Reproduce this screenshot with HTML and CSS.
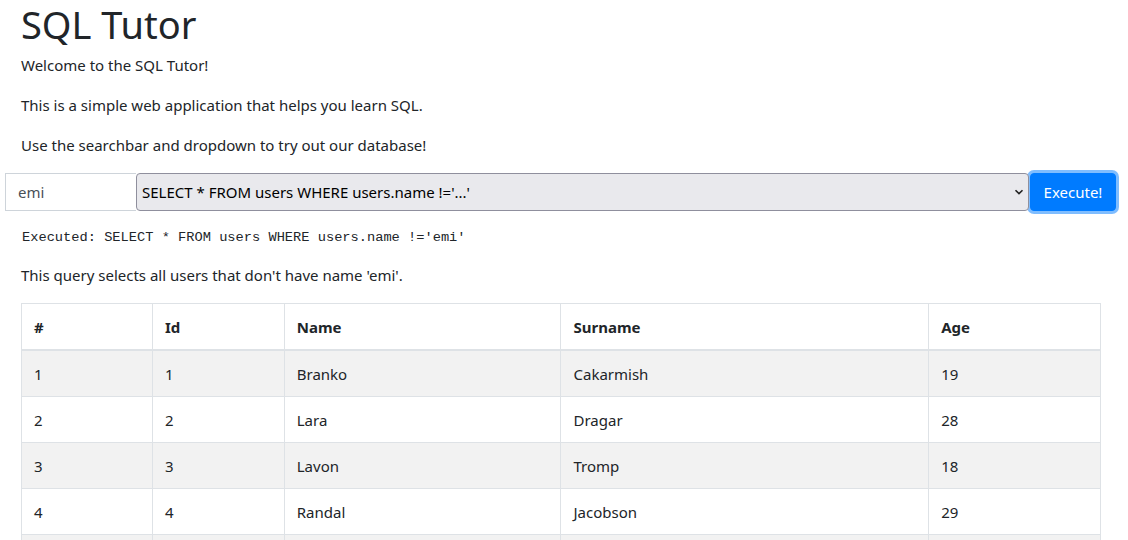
FILE: index.html
```html
<!DOCTYPE html>
<html lang="en">
<head>
<meta charset="utf-8">
<title>SQL Tutor</title>
<link rel="stylesheet" href="styles.css">
</head>
<body>
<div class="page">
  <h1 class="title">SQL Tutor</h1>
  <p>Welcome to the SQL Tutor!</p>
  <p>This is a simple web application that helps you learn SQL.</p>
  <p>Use the searchbar and dropdown to try out our database!</p>

  <form class="query-form" onsubmit="return false">
    <input class="search" type="text" value="emi">
    <div class="select-wrap">
      <select class="query-select">
        <option>SELECT * FROM users WHERE users.name !='...'</option>
      </select>
      <svg class="chevron" width="10" height="6" viewBox="0 0 10 6"><path d="M1.5 1.2 L5 4.6 L8.5 1.2" fill="none" stroke="#222" stroke-width="1.6"/></svg>
    </div>
    <button class="btn-exec" type="submit">Execute!</button>
  </form>

  <code class="executed">Executed: SELECT * FROM users WHERE users.name !='emi'</code>

  <p>This query selects all users that don't have name 'emi'.</p>

  <table class="results">
    <colgroup>
      <col class="c-num"><col class="c-id"><col class="c-name"><col class="c-surname"><col class="c-age">
    </colgroup>
    <thead>
      <tr><th>#</th><th>Id</th><th>Name</th><th>Surname</th><th>Age</th></tr>
    </thead>
    <tbody>
      <tr><td>1</td><td>1</td><td>Branko</td><td>Cakarmish</td><td>19</td></tr>
      <tr><td>2</td><td>2</td><td>Lara</td><td>Dragar</td><td>28</td></tr>
      <tr><td>3</td><td>3</td><td>Lavon</td><td>Tromp</td><td>18</td></tr>
      <tr><td>4</td><td>4</td><td>Randal</td><td>Jacobson</td><td>29</td></tr>
      <tr><td>5</td><td>5</td><td>Emilia</td><td>Kovac</td><td>24</td></tr>
    </tbody>
  </table>
</div>
</body>
</html>
```

FILE: styles.css
```css
* { box-sizing: border-box; }

html, body {
  margin: 0;
  background: #fff;
}

body {
  font-family: "Noto Sans", "Segoe UI", sans-serif;
  font-size: 15px;
  line-height: 24px;
  color: #212529;
}

.page {
  padding: 0 27px 0 21px;
}

.title {
  font-size: 38px;
  font-weight: 400;
  line-height: 48px;
  margin: 0 0 5px;
}

p {
  margin: 0 0 16px;
}

.query-form {
  display: flex;
  align-items: stretch;
  margin: 0 -15px 0 -16px;
  height: 38px;
}

.search {
  width: 131px;
  height: 38px;
  padding: 6px 12px;
  font: inherit;
  color: #495057;
  border: 1px solid #ced4da;
  border-right: none;
  border-radius: 0;
  background: #fff;
  outline: none;
}

.select-wrap {
  flex: 1;
  position: relative;
}

.query-select {
  appearance: none;
  -webkit-appearance: none;
  width: 100%;
  height: 38px;
  padding: 0 30px 0 5px;
  font: inherit;
  color: #000;
  background: #e9e9ed;
  border: 1px solid #8f8f9d;
  border-radius: 4px;
}

.chevron {
  position: absolute;
  right: 5px;
  top: 16px;
}

.btn-exec {
  width: 86px;
  margin-left: 1px;
  font: inherit;
  color: #fff;
  background: #007bff;
  border: 1px solid #007bff;
  border-radius: 4px;
  padding: 6px 12px;
  box-shadow: 0 0 0 3px rgba(0, 123, 255, 0.5);
  cursor: pointer;
}

.executed {
  display: block;
  margin: 16px 0 15px 1px;
  font-family: "Liberation Mono", "DejaVu Sans Mono", monospace;
  font-size: 13.7px;
  line-height: 21px;
  color: #212529;
}

.results {
  width: 1080px;
  border-collapse: collapse;
  border: 1px solid #dee2e6;
}

.results th,
.results td {
  border: 1px solid #dee2e6;
  padding: 10.5px 12px;
  text-align: left;
  vertical-align: top;
  line-height: 24px;
}

.results th {
  font-weight: 700;
  border-bottom: 2px solid #dee2e6;
}

.results tbody tr:nth-child(odd) {
  background: #f2f2f2;
}

.c-num { width: 131px; }
.c-id { width: 132px; }
.c-name { width: 277px; }
.c-surname { width: 368px; }
.c-age { width: 172px; }
```
